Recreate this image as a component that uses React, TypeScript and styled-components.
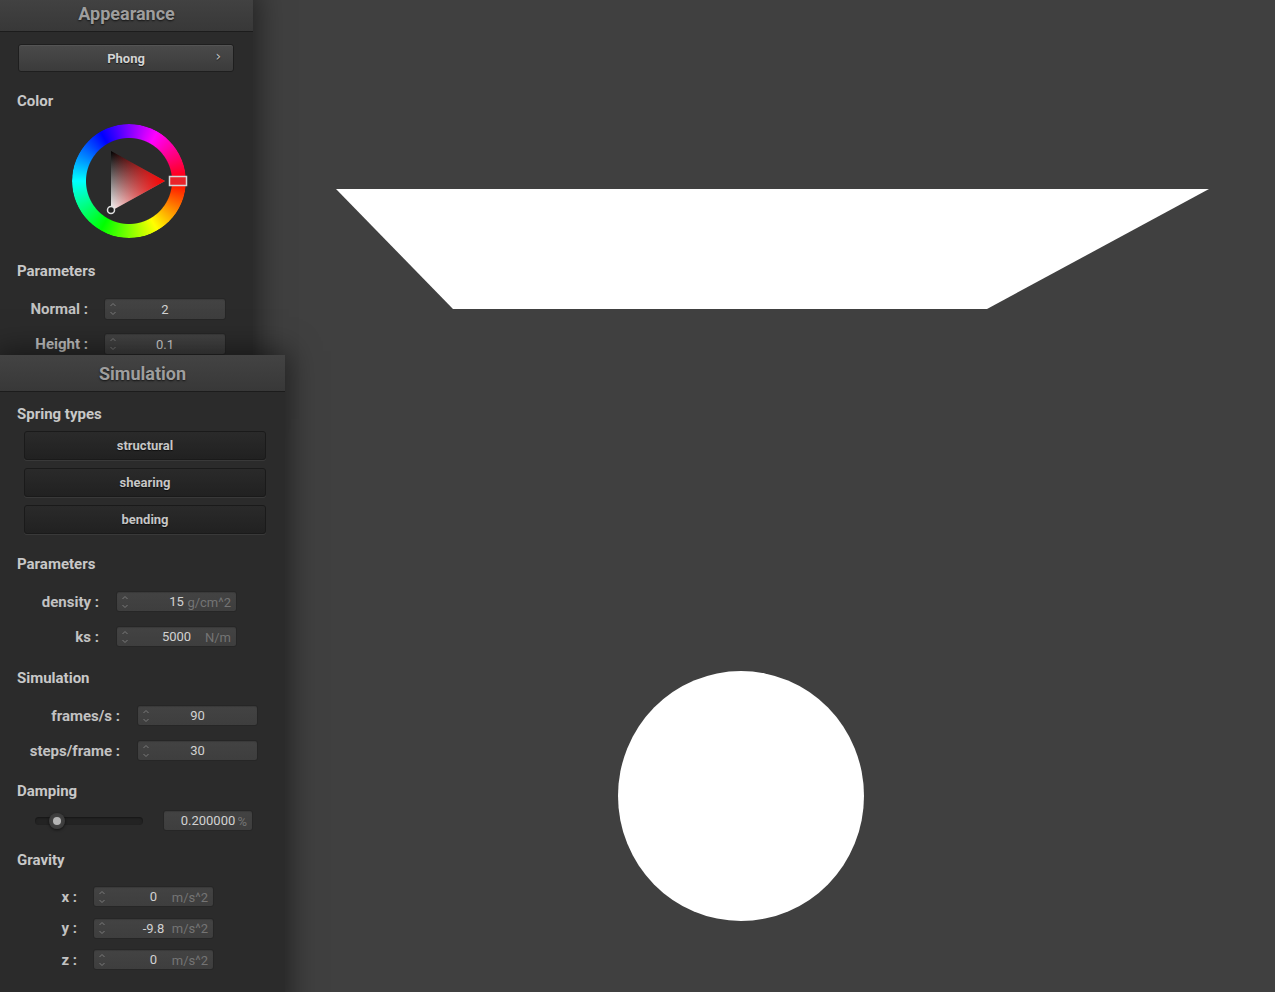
import React from "react";
import styled, { createGlobalStyle } from "styled-components";

const Global = createGlobalStyle`
  html, body { margin: 0; padding: 0; background: #404040; overflow: hidden; }
  body { font-family: Roboto, "Liberation Sans", sans-serif; }
  #root { width: 1275px; height: 992px; }
`;

const Desktop = styled.div`
  position: relative;
  width: 1275px;
  height: 992px;
  overflow: hidden;
  background: #404040;
`;

const Canvas = styled.svg`
  position: absolute;
  inset: 0;
`;

const Window = styled.section<{ $top: number; $width: number; $height: number }>`
  position: absolute;
  left: 0;
  top: ${(p) => p.$top}px;
  width: ${(p) => p.$width}px;
  height: ${(p) => p.$height}px;
  background: #2b2b2b;
  box-shadow: 0 0 28px 4px rgba(0, 0, 0, 0.5);
  display: flex;
  flex-direction: column;
`;

const Header = styled.header`
  flex: none;
  height: 36px;
  display: flex;
  align-items: center;
  justify-content: center;
  background: linear-gradient(#434343, #383838);
  border-bottom: 1px solid #1c1c1c;
  color: #9e9e9e;
  font: 700 18px Roboto, "Liberation Sans", sans-serif;
  text-shadow: 0 1px 2px rgba(0, 0, 0, 0.7);
`;

const Body = styled.div`
  display: flex;
  flex-direction: column;
`;

const SectionLabel = styled.div<{ $mt: number }>`
  margin-top: ${(p) => p.$mt}px;
  padding: 1px 0 0 17px;
  height: 19px;
  line-height: 20px;
  font: 700 15px Roboto, "Liberation Sans", sans-serif;
  color: #c8c8c8;
`;

const PopupButton = styled.div`
  position: relative;
  margin: 12px 19px 0 18px;
  height: 28px;
  box-sizing: border-box;
  border: 1px solid #1e1e1e;
  border-radius: 3px;
  background: linear-gradient(#4a4a4a, #3b3b3b);
  box-shadow: inset 0 1px 0 rgba(255, 255, 255, 0.06);
  display: flex;
  align-items: center;
  justify-content: center;
  font: 700 13px Roboto, "Liberation Sans", sans-serif;
  color: #d4d4d4;
  text-shadow: 0 1px 1px rgba(0, 0, 0, 0.6);
`;

const Chevron = styled.span`
  position: absolute;
  right: 12px;
  top: 3px;
  font: 400 14px "DejaVu Sans", sans-serif;
  color: #c0c0c0;
`;

const WheelWrap = styled.div`
  margin-top: 5px;
  padding-left: 64px;
  height: 130px;
`;

const Wheel = styled.div`
  position: relative;
  width: 130px;
  height: 130px;
`;

const Ring = styled.div`
  position: absolute;
  left: 8px;
  top: 8px;
  width: 114px;
  height: 114px;
  border-radius: 50%;
  background: conic-gradient(from 90deg, #ff0000, #ffff00, #00ff00, #00ffff, #0000ff, #ff00ff, #ff0000);
  -webkit-mask-image: radial-gradient(circle, transparent 42.5px, #000 43.5px);
  mask-image: radial-gradient(circle, transparent 42.5px, #000 43.5px);
`;

const WheelMarks = styled.svg`
  position: absolute;
  inset: 0;
`;

const FormGrid = styled.div<{ $mt: number; $labelEnd: number; $boxStart: number; $boxWidth: number; $rowH: number; $gap: number }>`
  margin-top: ${(p) => p.$mt}px;
  display: grid;
  grid-template-columns: ${(p) => p.$labelEnd}px ${(p) => p.$boxWidth}px;
  column-gap: ${(p) => p.$boxStart - p.$labelEnd}px;
  grid-auto-rows: ${(p) => p.$rowH}px;
  row-gap: ${(p) => p.$gap}px;
`;

const FieldLabel = styled.div`
  text-align: right;
  align-self: center;
  font: 700 15px Roboto, "Liberation Sans", sans-serif;
  color: #c2c2c2;
  white-space: nowrap;
`;

const TextBox = styled.div<{ $width?: number }>`
  position: relative;
  box-sizing: border-box;
  height: 100%;
  ${(p) => (p.$width ? `width: ${p.$width}px;` : "")}
  border: 1px solid #262626;
  border-radius: 3px;
  background: linear-gradient(#434343, #3e3e3e);
  box-shadow: inset 0 1px 1px rgba(0, 0, 0, 0.15);
  display: flex;
  align-items: center;
  justify-content: center;
  font: 400 13px Roboto, "Liberation Sans", sans-serif;
  color: #d2d2d2;
`;

const Unit = styled.span`
  position: absolute;
  right: 5px;
  top: 50%;
  transform: translateY(-50%);
  color: #747474;
`;

const SpinIcon = styled.svg`
  position: absolute;
  left: 4px;
  top: 50%;
  transform: translateY(-50%);
`;

const ButtonStack = styled.div`
  margin: 7px 19px 0 24px;
  display: flex;
  flex-direction: column;
  gap: 8px;
`;

const ToggleButton = styled.div`
  height: 29px;
  box-sizing: border-box;
  border: 1px solid #1a1a1a;
  border-radius: 3px;
  background: linear-gradient(#2a2a2a, #212121);
  box-shadow: 0 1px 0 rgba(255, 255, 255, 0.07);
  display: flex;
  align-items: center;
  justify-content: center;
  font: 700 13px Roboto, "Liberation Sans", sans-serif;
  color: #c6c6c6;
  text-shadow: 0 1px 1px rgba(0, 0, 0, 0.6);
`;

const SliderRow = styled.div`
  margin-top: 9px;
  height: 21px;
  padding-left: 35px;
  display: flex;
  align-items: center;
  gap: 20px;
`;

const Track = styled.div`
  position: relative;
  width: 108px;
  height: 8px;
  border-radius: 4px;
  background: #232323;
  box-shadow: inset 0 1px 2px rgba(0, 0, 0, 0.4);
`;

const Knob = styled.div`
  position: absolute;
  top: 50%;
  width: 16px;
  height: 16px;
  margin-left: -8px;
  transform: translateY(-50%);
  border-radius: 50%;
  background: radial-gradient(circle, #4a4a4a, #343434);
  box-shadow: 0 1px 3px rgba(0, 0, 0, 0.6);
  display: flex;
  align-items: center;
  justify-content: center;
  &::after {
    content: "";
    width: 8px;
    height: 8px;
    border-radius: 50%;
    background: #b4b4b4;
  }
`;

const Spin = () => (
  <SpinIcon width="8" height="16" viewBox="0 0 8 16">
    <path d="M1.5 5 L4 2.5 L6.5 5" fill="none" stroke="#7a7a7a" strokeWidth="1" />
    <path d="M1.5 11 L4 13.5 L6.5 11" fill="none" stroke="#7a7a7a" strokeWidth="1" />
  </SpinIcon>
);

type Field = { label: string; value: string; unit?: string };

const Form = ({ fields, mt, labelEnd, boxStart, boxWidth, rowH, gap }: { fields: Field[]; mt: number; labelEnd: number; boxStart: number; boxWidth: number; rowH: number; gap: number }) => (
  <FormGrid $mt={mt} $labelEnd={labelEnd} $boxStart={boxStart} $boxWidth={boxWidth} $rowH={rowH} $gap={gap}>
    {fields.map((f) => (
      <React.Fragment key={f.label}>
        <FieldLabel>{f.label}</FieldLabel>
        <TextBox>
          <Spin />
          {f.value}
          {f.unit && <Unit>{f.unit}</Unit>}
        </TextBox>
      </React.Fragment>
    ))}
  </FormGrid>
);

const ColorWheel = () => (
  <WheelWrap>
    <Wheel>
      <Ring />
      <WheelMarks width="130" height="130" viewBox="0 0 130 130">
        <defs>
          <linearGradient id="bw" x1="0" y1="0" x2="0" y2="1">
            <stop offset="0" stopColor="#000" />
            <stop offset="1" stopColor="#fff" />
          </linearGradient>
          <linearGradient id="red" x1="0" y1="0" x2="1" y2="0">
            <stop offset="0" stopColor="#ff0000" stopOpacity="0" />
            <stop offset="1" stopColor="#ff0000" stopOpacity="1" />
          </linearGradient>
        </defs>
        <polygon points="47,35 101,65 47,95" fill="url(#bw)" />
        <polygon points="47,35 101,65 47,95" fill="url(#red)" />
        <circle cx="47" cy="94" r="3.5" fill="#222" stroke="#e0e0e0" strokeWidth="1.5" />
        <rect x="105.5" y="60.5" width="17" height="9" fill="#e8242a" stroke="#d8d8d8" strokeWidth="1.5" />
      </WheelMarks>
    </Wheel>
  </WheelWrap>
);

export default function App() {
  const damping = 0.2;
  return (
    <Desktop>
      <Global />
      <Canvas width="1275" height="992" viewBox="0 0 1275 992">
        <polygon points="336,189 1209,189 987,309 453,309" fill="#ffffff" />
        <ellipse cx="741" cy="796" rx="123" ry="125" fill="#ffffff" />
      </Canvas>

      <Window $top={-5} $width={253} $height={420}>
        <Header>Appearance</Header>
        <Body>
          <PopupButton>
            Phong
            <Chevron>›</Chevron>
          </PopupButton>
          <SectionLabel $mt={19}>Color</SectionLabel>
          <ColorWheel />
          <SectionLabel $mt={15}>Parameters</SectionLabel>
          <Form
            mt={17}
            labelEnd={88}
            boxStart={104}
            boxWidth={122}
            rowH={22}
            gap={13}
            fields={[
              { label: "Normal :", value: "2" },
              { label: "Height :", value: "0.1" },
            ]}
          />
        </Body>
      </Window>

      <Window $top={355} $width={285} $height={660}>
        <Header>Simulation</Header>
        <Body>
          <SectionLabel $mt={12}>Spring types</SectionLabel>
          <ButtonStack>
            <ToggleButton>structural</ToggleButton>
            <ToggleButton>shearing</ToggleButton>
            <ToggleButton>bending</ToggleButton>
          </ButtonStack>
          <SectionLabel $mt={20}>Parameters</SectionLabel>
          <Form
            mt={17}
            labelEnd={99}
            boxStart={116}
            boxWidth={121}
            rowH={21}
            gap={14}
            fields={[
              { label: "density :", value: "15", unit: "g/cm^2" },
              { label: "ks :", value: "5000", unit: "N/m" },
            ]}
          />
          <SectionLabel $mt={21}>Simulation</SectionLabel>
          <Form
            mt={17}
            labelEnd={120}
            boxStart={137}
            boxWidth={121}
            rowH={21}
            gap={14}
            fields={[
              { label: "frames/s :", value: "90" },
              { label: "steps/frame :", value: "30" },
            ]}
          />
          <SectionLabel $mt={20}>Damping</SectionLabel>
          <SliderRow>
            <Track>
              <Knob style={{ left: `${damping * 100}%` }} />
            </Track>
            <TextBox $width={90}>
              0.200000
              <Unit>%</Unit>
            </TextBox>
          </SliderRow>
          <SectionLabel $mt={19}>Gravity</SectionLabel>
          <Form
            mt={16}
            labelEnd={77}
            boxStart={93}
            boxWidth={121}
            rowH={21}
            gap={10.5}
            fields={[
              { label: "x :", value: "0", unit: "m/s^2" },
              { label: "y :", value: "-9.8", unit: "m/s^2" },
              { label: "z :", value: "0", unit: "m/s^2" },
            ]}
          />
        </Body>
      </Window>
    </Desktop>
  );
}
